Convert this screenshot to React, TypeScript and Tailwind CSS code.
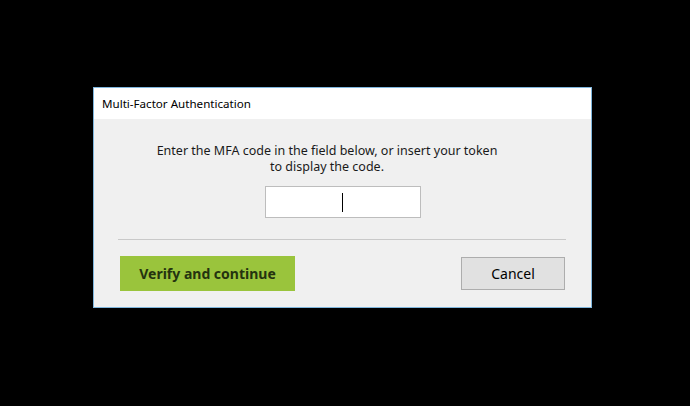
import React from 'react';

export default function App() {
    return (
        <div className="w-[690px] h-[406px] bg-black pt-[87px] pl-[93px]" style={{ fontFamily: '"Noto Sans", "Open Sans", sans-serif' }}>
            <div className="w-[499px] h-[221px] border border-[#7fb6dd] bg-[#f0f0f0] flex flex-col">
                <div className="h-[31px] bg-white flex items-center pl-[8px] text-[11.6px] leading-4 text-black">
                    Multi-Factor Authentication
                </div>
                <div className="flex-1 flex flex-col pt-[24px]">
                    <p className="ml-[43px] w-[380px] text-center text-[12.5px] leading-4 text-[#1a1a1a]">
                        Enter the MFA code in the field below, or insert your token
                        <br />
                        to display the code.
                    </p>
                    <div className="mx-auto mt-[11px] w-[156px] h-[32px] bg-white border border-[#bdbdbd] flex items-center justify-center">
                        <span className="w-px h-[19px] bg-black" />
                    </div>
                    <div className="ml-[24px] mr-[25px] mt-[21px] h-px bg-[#c9c9c9]" />
                    <div className="flex items-start justify-between mt-[16px] pl-[26px] pr-[26px]">
                        <button className="w-[175px] h-[35px] bg-[#9ac43c] text-[14px] font-bold text-[#24330f]">
                            Verify and continue
                        </button>
                        <button className="mt-px w-[104px] h-[33px] bg-[#e1e1e1] border border-[#adadad] text-[14px] text-black">
                            Cancel
                        </button>
                    </div>
                </div>
            </div>
        </div>
    );
}
